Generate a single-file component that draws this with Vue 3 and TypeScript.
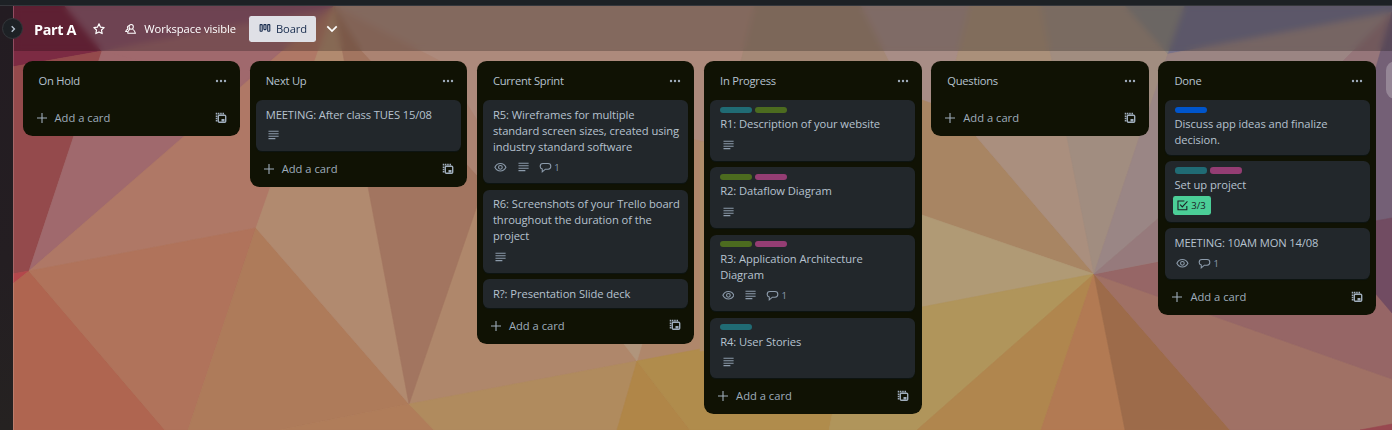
<script setup lang="ts">
type LabelColor = 'teal' | 'lime' | 'magenta' | 'blue'

interface Card {
  title: string
  labels?: LabelColor[]
  watching?: boolean
  description?: boolean
  comments?: number
  checklist?: string
}

interface List {
  name: string
  cards: Card[]
}

const lists: List[] = [
  { name: 'On Hold', cards: [] },
  { name: 'Next Up', cards: [{ title: 'MEETING: After class TUES 15/08', description: true }] },
  {
    name: 'Current Sprint',
    cards: [
      {
        title: 'R5: Wireframes for multiple\nstandard screen sizes, created using\nindustry standard software',
        watching: true,
        description: true,
        comments: 1,
      },
      { title: 'R6: Screenshots of your Trello board\nthroughout the duration of the\nproject', description: true },
      { title: 'R?: Presentation Slide deck' },
    ],
  },
  {
    name: 'In Progress',
    cards: [
      { title: 'R1: Description of your website', labels: ['teal', 'lime'], description: true },
      { title: 'R2: Dataflow Diagram', labels: ['lime', 'magenta'], description: true },
      {
        title: 'R3: Application Architecture\nDiagram',
        labels: ['lime', 'magenta'],
        watching: true,
        description: true,
        comments: 1,
      },
      { title: 'R4: User Stories', labels: ['teal'], description: true },
    ],
  },
  { name: 'Questions', cards: [] },
  {
    name: 'Done',
    cards: [
      { title: 'Discuss app ideas and finalize\ndecision.', labels: ['blue'] },
      { title: 'Set up project', labels: ['teal', 'magenta'], checklist: '3/3' },
      { title: 'MEETING: 10AM MON 14/08', watching: true, comments: 1 },
    ],
  },
]

const hasBadges = (c: Card): boolean => !!(c.watching || c.description || c.comments || c.checklist)

// Facets of the board wallpaper, painted back to front.
const facets: { points: string; fill: string }[] = [
  { points: '334,0 760,0 741,61 704,142 704,349 637,361 409,404 477,206', fill: '#ad8a7c' },
  { points: '409,404 477,204 540,100 704,142 704,349 637,361', fill: '#af876b' },
  { points: '0,0 60,0 102,51 0,69', fill: '#7c2b43' },
  { points: '0,69 102,51 29,271 0,276', fill: '#944a4c' },
  { points: '60,0 334,0 334,8 29,271 102,51', fill: '#a0696d' },
  { points: '60,0 334,0 334,8 250,22 102,51', fill: '#91586c' },
  { points: '334,8 102,51 240,85', fill: '#a0696d' },
  { points: '334,6 256,228 29,271', fill: '#af7866' },
  { points: '0,276 29,271 0,294', fill: '#b3484c' },
  { points: '0,294 29,271 165,430 0,430', fill: '#af6550' },
  { points: '29,271 256,228 188,430 165,430', fill: '#b0735b' },
  { points: '256,228 409,404 280,430 188,430', fill: '#ae7b5a' },
  { points: '409,404 434,430 280,430', fill: '#b07d5a' },
  { points: '334,6 409,404 256,228', fill: '#b18a6f' },
  { points: '334,6 362,51 477,175 477,206 409,404', fill: '#a27560' },
  { points: '334,6 362,51 477,175 477,120 440,61', fill: '#ab8372' },
  { points: '409,404 637,361 617,430 434,430', fill: '#b08b5e' },
  { points: '624,344 642,344 637,361', fill: '#b0957c' },
  { points: '637,361 690,430 617,430', fill: '#b08648' },
  { points: '637,361 922,307 832,415 829,430 690,430', fill: '#b08c4c' },
  { points: '756,0 858,0 935,120 922,150 741,61', fill: '#a48876' },
  { points: '858,0 971,0 956,61 975,135 922,125', fill: '#a88d86' },
  { points: '971,0 1040,0 1067,135 975,135 956,61', fill: '#aa907a' },
  { points: '922,100 950,110 975,135 1094,274 922,215', fill: '#a88563' },
  { points: '700,142 710,142 710,350 700,351', fill: '#b08d6a' },
  { points: '922,215 1094,274 922,307', fill: '#b09a75' },
  { points: '922,307 1094,274 917,430 829,430 832,415', fill: '#b0955b' },
  { points: '1094,274 1041,430 917,430', fill: '#b0864e' },
  { points: '1094,274 1125,430 1041,430', fill: '#b27a53' },
  { points: '1094,274 1230,430 1125,430', fill: '#9d6b4a' },
  { points: '1094,274 1392,379 1392,430 1230,430', fill: '#a07165' },
  { points: '1094,274 1392,217 1392,379', fill: '#966666' },
  { points: '1360,430 1392,424 1392,430', fill: '#984850' },
  { points: '956,61 1052,61 1067,135 1094,274 975,135', fill: '#aa8f7e' },
  { points: '1040,0 1120,0 1168,54 1140,135 1094,274 1052,61', fill: '#a18d80' },
  { points: '1168,54 1140,135 1094,274 1160,217 1345,61', fill: '#9a8685' },
  { points: '1094,274 1160,217 1160,261', fill: '#967a7c' },
  { points: '1120,0 1187,0 1168,54', fill: '#8d8682' },
  { points: '1187,0 1392,0 1392,12 1168,54', fill: '#79738a' },
  { points: '1168,54 1392,12 1345,61 1159,80', fill: '#9b8583' },
  { points: '1392,12 1392,51 1376,90 1340,64', fill: '#96767a' },
  { points: '1392,12 1392,218 1370,222 1370,88', fill: '#746076' },
  { points: '1370,222 1392,218 1392,313 1370,287', fill: '#714c62' },
]
</script>

<template>
  <div class="app">
    <svg class="wallpaper" viewBox="0 0 1392 430" aria-hidden="true">
      <rect width="1392" height="430" fill="#ad8a7c" />
      <polygon v-for="(f, i) in facets" :key="i" :points="f.points" :fill="f.fill" :stroke="f.fill" stroke-width="0.6" />
    </svg>

    <div class="topbar" />
    <div class="workspace">
      <aside class="rail">
        <button class="expand" aria-label="Expand sidebar">
          <svg viewBox="0 0 10 10"><path d="M3.7 2.3 6.4 5 3.7 7.7" /></svg>
        </button>
      </aside>

      <main class="board">
        <header class="board-header">
          <h1>Part A</h1>
          <svg class="star" viewBox="0 0 24 24">
            <path d="M12 3.2l2.7 5.6 6.1.8-4.5 4.2 1.1 6.1L12 17l-5.4 2.900 1.100-6.100-4.500-4.200 6.100-.8z" />
          </svg>
          <span class="visibility">
            <svg class="people" viewBox="0 0 12 12">
              <path d="M6.600 1.200c1.400 0 2.300 1 2.300 2.300S8 6.200 6.600 6.200 4.400 4.900 4.400 3.500 5.300 1.200 6.600 1.200z" />
              <path d="M2.700 10.500c.3-2 1.300-3.300 2.500-4.300M8.100 6.200c1.400.9 2.600 2.300 3 4.300H2.700" />
              <path d="M4.400 2.600C3 2.600 2.300 3.700 2.700 4.900L3.300 6C1.800 6.700.9 7.600.7 8.700H3" />
            </svg>
            Workspace visible
          </span>
          <span class="view">
            <svg class="board-icon" viewBox="0 0 12 10">
              <rect x="1.1" y="1.600" width="2.1" height="6.600" rx=".5" />
              <rect x="4.900" y="1.600" width="2.1" height="5" rx=".5" />
              <rect x="8.700" y="1.600" width="2.1" height="6.600" rx=".5" />
            </svg>
            Board
          </span>
          <svg class="chevron" viewBox="0 0 12 8"><path d="M1.300 1.300 6 6l4.700-4.700" /></svg>
        </header>

        <div class="lists">
          <section v-for="list in lists" :key="list.name" class="list">
            <div class="list-head">
              <h2>{{ list.name }}</h2>
              <svg class="dots" viewBox="0 0 12 4">
                <circle cx="2" cy="2" r="1.2" /><circle cx="6" cy="2" r="1.2" /><circle cx="10" cy="2" r="1.2" />
              </svg>
            </div>

            <div class="cards">
              <article v-for="card in list.cards" :key="card.title" class="card">
                <div v-if="card.labels" class="labels">
                  <span v-for="l in card.labels" :key="l" class="label" :class="l" />
                </div>
                <p class="title" :class="{ caps: card.title.startsWith('MEETING') }">{{ card.title }}</p>
                <div v-if="hasBadges(card)" class="badges">
                  <span v-if="card.watching" class="badge">
                    <svg viewBox="0 0 13 13" class="line">
                      <path d="M.9 6.400C2 4.100 4 2.600 6.500 2.600s4.500 1.500 5.600 3.800C11 8.700 9 10.200 6.500 10.200S2 8.700.9 6.400z" />
                      <circle cx="6.500" cy="6.400" r="1.900" />
                    </svg>
                  </span>
                  <span v-if="card.description" class="badge">
                    <svg viewBox="0 0 13 13" class="line">
                      <path d="M1.500 2.300h10.300M1.500 4.800h10.300M1.500 7.300h10.300M1.500 9.800h7" />
                    </svg>
                  </span>
                  <span v-if="card.comments" class="badge">
                    <svg viewBox="0 0 13 13" class="line">
                      <path d="M3.300 11V8.100C2 7.800 1.200 7 1.200 5.600c0-1.800 1.100-3 2.800-3h5.200c1.700 0 2.800 1.100 2.800 2.800S10.900 8.300 9.200 8.300H6.500z" />
                    </svg>
                    <span class="count">{{ card.comments }}</span>
                  </span>
                  <span v-if="card.checklist" class="badge complete">
                    <svg viewBox="0 0 13 13" class="line">
                      <path d="M8.500 2H2v9h9V7" /><path d="M4.200 5.700 6.400 8l5.200-5.500" />
                    </svg>
                    <span class="count">{{ card.checklist }}</span>
                  </span>
                </div>
              </article>
            </div>

            <div class="add">
              <svg class="plus" viewBox="0 0 12 12"><path d="M6 1v10M1 6h10" /></svg>
              <span>Add a card</span>
              <svg class="template" viewBox="0 0 12 12">
                <path class="dash" d="M1.600 9.500V1.600h8" />
                <rect x="3.300" y="3.300" width="7.400" height="7" rx="1" />
                <path class="fill" d="M6.500 7h3v2.500h-3z" />
              </svg>
            </div>
          </section>
          <div class="add-list" />
        </div>
      </main>
    </div>
  </div>
</template>

<style>
body {
  margin: 0;
  overflow: hidden;
}
</style>

<style scoped>
.app {
  position: relative;
  display: flex;
  flex-direction: column;
  width: 1392px;
  height: 430px;
  overflow: hidden;
  font-family: 'Open Sans', 'Noto Sans', sans-serif;
  font-size: 11.2px;
  line-height: 16px;
  color: #b6c2cf;
}
.wallpaper {
  position: absolute;
  inset: 0;
  width: 1392px;
  height: 430px;
}
.topbar {
  position: relative;
  flex: none;
  box-sizing: border-box;
  height: 6px;
  background: #1d2125;
  border-bottom: 1px solid #35373c;
}
.workspace {
  position: relative;
  display: flex;
  flex: 1;
  min-height: 0;
}
.rail {
  position: relative;
  z-index: 2;
  flex: none;
  box-sizing: border-box;
  width: 13px;
  background: linear-gradient(#231c22, #241e22 60%, #252221);
}
.expand {
  position: absolute;
  left: 2px;
  top: 12px;
  display: grid;
  place-items: center;
  box-sizing: border-box;
  width: 21px;
  height: 21px;
  padding: 0;
  border: 1px solid #34373b;
  border-radius: 50%;
  background: #1d2125;
}
.expand svg {
  width: 10px;
  height: 10px;
  fill: none;
  stroke: #b6c2cf;
  stroke-width: 1.4;
}
.board {
  flex: 1;
  min-width: 0;
  box-sizing: border-box;
  border-left: 1px solid rgba(255, 255, 255, 0.16);
}
.board-header {
  display: flex;
  align-items: center;
  box-sizing: border-box;
  height: 45px;
  padding-left: 20px;
  background: rgba(0, 0, 0, 0.24);
  backdrop-filter: blur(3px);
  color: #fff;
}
h1 {
  width: 43px;
  margin: 3px 0 0;
  font-size: 14.4px;
  line-height: 20px;
  font-weight: 700;
  letter-spacing: -0.35px;
  white-space: nowrap;
}
.star {
  width: 14px;
  height: 14px;
  margin-left: 15px;
  fill: none;
  stroke: #fff;
  stroke-width: 2;
  stroke-linejoin: round;
}
.visibility {
  display: flex;
  align-items: center;
  width: 111px;
  margin-left: 19px;
  letter-spacing: -0.07px;
  white-space: nowrap;
}
.people {
  width: 12px;
  height: 12px;
  margin-right: 8px;
  fill: none;
  stroke: #fff;
  stroke-width: 1.1;
}
.view {
  display: flex;
  align-items: center;
  box-sizing: border-box;
  width: 67px;
  height: 26px;
  margin-left: 13px;
  padding-left: 10px;
  border-radius: 2.4px;
  background: #dfe0e6;
  color: #172b4d;
  letter-spacing: -0.15px;
}
.board-icon {
  width: 12px;
  height: 10px;
  margin-right: 5px;
  margin-top: -2px;
  fill: none;
  stroke: #172b4d;
  stroke-width: 1.1;
}
.chevron {
  width: 12px;
  height: 8px;
  margin-left: 10px;
  fill: none;
  stroke: #fff;
  stroke-width: 1.7;
}
.lists {
  display: flex;
  align-items: flex-start;
  gap: 9.6px;
  padding: 10px 0 0 8.5px;
}
.list {
  flex: none;
  width: 217.6px;
  border-radius: 9.6px;
  background: #101204;
}
.list-head {
  display: flex;
  align-items: center;
  justify-content: space-between;
  height: 39.3px;
  padding: 0 13px 0 16px;
}
h2 {
  margin: 1px 0 0;
  font-size: 11.2px;
  line-height: 16px;
  font-weight: 400;
  letter-spacing: -0.25px;
}
.dots {
  width: 12px;
  height: 4px;
  fill: #9fadbc;
}
.cards {
  display: flex;
  flex-direction: column;
  gap: 6.4px;
  padding: 0 6.4px;
}
.card {
  padding: 6.4px 0 6.4px 9.7px;
  border-radius: 6.4px;
  background: #22272b;
  box-shadow: 0 1px 1px rgba(9, 30, 66, 0.25);
}
.labels {
  display: flex;
  gap: 3.2px;
  height: 6.4px;
  margin-bottom: 3.2px;
}
.label {
  width: 32px;
  border-radius: 3.2px;
}
.teal { background: #206b74; }
.lime { background: #4c6b1f; }
.magenta { background: #943d73; }
.blue { background: #0055cc; }
.title {
  margin: 0;
  letter-spacing: -0.07px;
  white-space: pre;
}
.caps {
  letter-spacing: -0.13px;
}
.badges {
  display: flex;
  gap: 3.2px;
  height: 19.2px;
  margin: 3.2px 0 0 -1.7px;
  color: #8c9bab;
}
.badge {
  display: flex;
  align-items: center;
  box-sizing: border-box;
  height: 19.2px;
  padding: 0 3.2px;
}
.badge svg {
  width: 12.8px;
  height: 12.8px;
}
.line {
  fill: none;
  stroke: currentColor;
  stroke-width: 1.1;
}
.count {
  margin: 1px 0 0 2.4px;
  font-size: 9.6px;
}
.complete {
  width: 38px;
  border-radius: 2.4px;
  background: #4bce97;
  color: #1d2125;
}
.add {
  display: flex;
  align-items: center;
  height: 35.6px;
  padding: 0 13px 0 13px;
  color: #9fadbc;
}
.plus {
  width: 12px;
  height: 12px;
  margin-right: 7px;
  fill: none;
  stroke: #9fadbc;
  stroke-width: 1.1;
}
.template {
  width: 12px;
  height: 12px;
  margin: -1px 0 0 auto;
  fill: none;
  stroke: #9fadbc;
  stroke-width: 1.4;
}
.template .dash {
  stroke-dasharray: 1.5 0.8;
  stroke-width: 1.7;
}
.template .fill {
  fill: #9fadbc;
  stroke: none;
}
.add-list {
  flex: none;
  width: 217.6px;
  height: 38px;
  border-radius: 9.6px;
  background: rgba(255, 255, 255, 0.24);
}
</style>
